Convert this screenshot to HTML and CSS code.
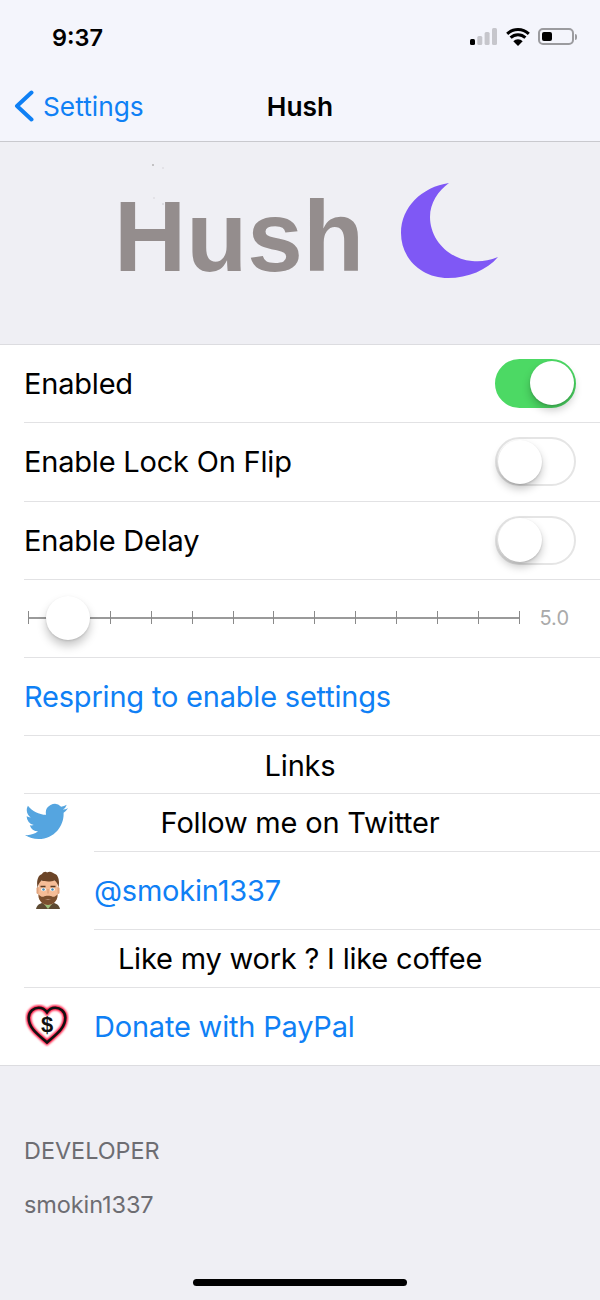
FILE: index.html
```html
<html>
<head>
<meta charset="UTF-8">
<meta name="viewport" content="width=device-width, initial-scale=1.0">
<title>Hush</title>
<link rel="stylesheet" href="styles.css">
</head>
<body>
<div class="phone">
    <div class="topbar">
        <div class="status">
            <span class="time">9:37</span>
            <div class="status-icons">
                <svg class="signal" width="27" height="17" viewBox="0 0 27 17">
                    <rect x="0" y="11" width="5" height="6" rx="1.5" fill="#000"/>
                    <rect x="7.3" y="8" width="5" height="9" rx="1.5" fill="#c6c6cc"/>
                    <rect x="14.6" y="4" width="5" height="13" rx="1.5" fill="#c6c6cc"/>
                    <rect x="22" y="0" width="5" height="17" rx="1.5" fill="#c6c6cc"/>
                </svg>
                <svg class="wifi" width="24" height="18" viewBox="0 0 24 18">
                    <path d="M12 18L7.300 13.200a6.600 6.600 0 0 1 9.400 0z" fill="#000"/>
                    <path d="M1.200 5.800a15.800 15.800 0 0 1 21.600 0M4.600 9.600a10.800 10.800 0 0 1 14.800 0" fill="none" stroke="#000" stroke-width="3"/>
                </svg>
                <div class="battery"><span class="battery-level"></span></div>
                <span class="battery-nub"></span>
            </div>
        </div>
        <div class="nav">
            <a class="back">
                <svg width="20" height="32" viewBox="0 0 20 32"><path d="M17.500 2.500L3 16l14.500 13.500" fill="none" stroke="#0f80f5" stroke-width="4" stroke-linecap="round" stroke-linejoin="round"/></svg>
                <span>Settings</span>
            </a>
            <span class="nav-title">Hush</span>
        </div>
    </div>

    <div class="banner">
        <svg class="specks" width="20" height="45" viewBox="0 0 20 45">
            <circle cx="3" cy="2" r="1" fill="#b5b3b5"/>
            <circle cx="13" cy="5" r="0.8" fill="#d3d2d6"/>
            <circle cx="4" cy="35" r="0.8" fill="#d3d2d6"/>
            <circle cx="13" cy="41" r="0.8" fill="#c5c4c8"/>
        </svg>
        <span class="logo-text">Hush</span>
        <svg class="moon" width="100" height="100" viewBox="0 0 100 100">
            <path d="M49 2C22 6 1 26 1 52c0 26 21 45 47 45 20 0 39-8 50-21-10 4-18 5-26 4C48 78 30 58 30 36 30 22 38 10 49 2z" fill="#7f58f5"/>
        </svg>
    </div>

    <div class="list">
        <div class="row tall">
            <span class="row-label first-label">Enabled</span>
            <div class="toggle on"><span class="knob"></span></div>
        </div>
        <div class="row tall">
            <span class="row-label">Enable Lock On Flip</span>
            <div class="toggle"><span class="knob"></span></div>
        </div>
        <div class="row tall">
            <span class="row-label">Enable Delay</span>
            <div class="toggle"><span class="knob"></span></div>
        </div>
        <div class="row tall">
            <div class="slider">
                <div class="ticks">
                    <i></i><i></i><i></i><i></i><i></i><i></i><i></i><i></i><i></i><i></i><i></i><i></i><i></i>
                </div>
                <span class="slider-thumb"></span>
            </div>
            <span class="slider-value">5.0</span>
        </div>
        <div class="row tall">
            <span class="row-label link">Respring to enable settings</span>
        </div>
        <div class="row short center-row">
            <span class="row-label">Links</span>
        </div>
        <div class="icon-row short">
            <div class="icon-cell">
                <svg class="bird" width="43" height="37" viewBox="0 2 24 20"><path d="M23.953 4.570a10 10 0 01-2.825.775 4.958 4.958 0 002.163-2.723c-.951.555-2.005.959-3.127 1.184a4.920 4.920 0 00-8.384 4.482C7.690 8.095 4.067 6.130 1.640 3.162a4.822 4.822 0 00-.666 2.475c0 1.710.870 3.213 2.188 4.096a4.904 4.904 0 01-2.228-.616v.060a4.923 4.923 0 003.946 4.827 4.996 4.996 0 01-2.212.085 4.936 4.936 0 004.604 3.417 9.867 9.867 0 01-6.102 2.105c-.390 0-.779-.023-1.170-.067a13.995 13.995 0 007.557 2.209c9.053 0 13.998-7.496 13.998-13.985 0-.210 0-.420-.015-.630A9.935 9.935 0 0024 4.590z" fill="#55a5e0"/></svg>
            </div>
            <span class="row-label centered">Follow me on Twitter</span>
        </div>
        <div class="icon-row tall">
            <div class="icon-cell">
                <svg class="memoji" width="30" height="38" viewBox="0 0 30 38">
                    <path d="M3 38c1-5 6-7 12-7s11 2 12 7z" fill="#5d4a32"/>
                    <path d="M11 33l4 5 4-5z" fill="#9dc07a"/>
                    <rect x="3.500" y="16" width="3" height="7" rx="1.500" fill="#e0a47e"/>
                    <rect x="23.500" y="16" width="3" height="7" rx="1.500" fill="#e0a47e"/>
                    <path d="M5.500 10h19v14c0 6-5 10-9.500 10S5.500 30 5.500 24z" fill="#f5bd97"/>
                    <path d="M5.500 23c1 2 3 3 5 2.800 2-1.300 7-1.300 9 0 2 .2 4-.8 5-2.800v2c0 5-5 9-9.500 9S5.500 30 5.500 25z" fill="#7a4f2e"/>
                    <path d="M12 28q3 1.200 6 0-3 2.200-6 0z" fill="#f6d8c8"/>
                    <path d="M4.500 17C3 8 6 4 9 3c1-2 4-3 5-1.500 3-2 6 0 7 1 4 1 6 6 4.500 14-1-4-2-6-4-7-4 1.500-10 1-13 0-2 2-3.500 4-4 7.500z" fill="#6b4427"/>
                    <ellipse cx="10.500" cy="18.500" rx="2.400" ry="1.700" fill="#fff"/>
                    <ellipse cx="19.500" cy="18.500" rx="2.400" ry="1.700" fill="#fff"/>
                    <circle cx="10.500" cy="18.500" r="1.300" fill="#4d8ab0"/>
                    <circle cx="19.500" cy="18.500" r="1.300" fill="#4d8ab0"/>
                    <path d="M7.500 15.500h5M17.500 15.500h5" stroke="#5a3a22" stroke-width="1.300"/>
                    <path d="M15 18v4.500" stroke="#d99b75" stroke-width="1.200"/>
                </svg>
            </div>
            <span class="row-label link">@smokin1337</span>
        </div>
        <div class="row short center-row">
            <span class="row-label">Like my work ? I like coffee</span>
        </div>
        <div class="icon-row tall last">
            <div class="icon-cell">
                <svg class="heart" width="44" height="43" viewBox="0 0 48 47">
                    <defs><filter id="glow" x="-20%" y="-20%" width="140%" height="140%"><feGaussianBlur stdDeviation="1"/></filter></defs>
                    <path d="M24 42C15 34 4 27 4 15 4 8 10 4 15 4c4 0 7 2 9 5 2-3 5-5 9-5 5 0 11 4 11 11 0 12-11 19-20 27z" fill="none" stroke="#ff0030" stroke-width="5.500" filter="url(#glow)"/>
                    <path d="M24 42C15 34 4 27 4 15 4 8 10 4 15 4c4 0 7 2 9 5 2-3 5-5 9-5 5 0 11 4 11 11 0 12-11 19-20 27z" fill="none" stroke="#111" stroke-width="2.800"/>
                    <text x="24" y="31" class="heart-dollar">$</text>
                </svg>
            </div>
            <span class="row-label link">Donate with PayPal</span>
        </div>
    </div>

    <div class="footer">
        <div class="footer-title">DEVELOPER</div>
        <div class="footer-name">smokin1337</div>
        <div class="home-bar"></div>
    </div>
</div>
</body>
</html>
```

FILE: styles.css
```css
html, body {
    margin: 0;
    padding: 0;
}
body {
    font-family: Inter, Roboto, sans-serif;
    background-color: #efeff4;
    color: #000;
}
.phone {
    width: 600px;
    height: 1300px;
    overflow: hidden;
    display: flex;
    flex-direction: column;
}

/* top bars */
.topbar {
    height: 141px;
    background-color: #f4f5fc;
    border-bottom: 1px solid #c9c9ce;
    flex: none;
}
.status {
    height: 74px;
    display: flex;
    justify-content: space-between;
    box-sizing: border-box;
    padding: 22px 23px 0 52px;
}
.time {
    font-size: 23.500px;
    font-weight: 600;
    line-height: 32px;
}
.status-icons {
    display: flex;
    align-items: flex-start;
    padding-top: 6px;
}
.wifi {
    margin-left: 9px;
}
.battery {
    width: 36px;
    height: 17px;
    margin-left: 8px;
    border: 2px solid #9b9b9f;
    border-radius: 5px;
    box-sizing: border-box;
    padding: 2px;
}
.battery-level {
    display: block;
    width: 10px;
    height: 100%;
    background-color: #000;
    border-radius: 2px;
}
.battery-nub {
    width: 2px;
    height: 6px;
    margin: 6px 0 0 1px;
    background-color: #9b9b9f;
    border-radius: 0 2px 2px 0;
}
.nav {
    height: 67px;
    display: flex;
    align-items: center;
    justify-content: center;
    position: relative;
}
.back {
    position: absolute;
    left: 14px;
    top: 16px;
    display: flex;
    align-items: center;
    gap: 9px;
    color: #0f80f5;
    font-size: 26.300px;
}
.nav-title {
    font-size: 26.300px;
    font-weight: 600;
    margin-top: -2px;
}

/* logo */
.banner {
    height: 202px;
    flex: none;
    position: relative;
    display: flex;
    align-items: flex-start;
    box-sizing: border-box;
    padding: 39px 0 0 114px;
    background-color: #efeff4;
}
.specks {
    position: absolute;
    left: 150px;
    top: 21px;
}
.logo-text {
    font-family: "Liberation Sans", Arial, sans-serif;
    font-weight: 700;
    font-size: 100px;
    line-height: 110px;
    color: #948d8d;
}
.moon {
    margin-left: 36px;
}

/* list */
.list {
    background-color: #fff;
    border-top: 1px solid #dcdce0;
    border-bottom: 1px solid #dcdce0;
    flex: none;
}
.row, .icon-row {
    display: flex;
    align-items: center;
    box-sizing: border-box;
    position: relative;
}
.row {
    margin-left: 24px;
    padding-right: 24px;
    border-bottom: 1px solid #e2e2e4;
    justify-content: space-between;
}
.tall {
    height: 78.300px;
}
.short {
    height: 57.600px;
}
.icon-row.last {
    height: 77.400px;
}
.row-label {
    font-size: 29px;
    letter-spacing: -0.200px;
}
.first-label {
    margin-top: -1px;
}
.link {
    color: #0f80f5;
}
.center-row {
    margin-left: 0;
    padding: 0;
    justify-content: center;
    border-bottom: 0;
    box-shadow: inset 0 -1px 0 #e2e2e4;
}
.center-row::before {
    content: "";
    position: absolute;
    left: 0;
    bottom: 0;
    width: 24px;
    height: 1px;
    background-color: #fff;
}
.icon-cell {
    width: 94px;
    flex: none;
    display: flex;
    padding-left: 25px;
    box-sizing: border-box;
}
.icon-row .row-label {
    flex: 1;
    align-self: stretch;
    display: flex;
    align-items: center;
    border-bottom: 1px solid #e2e2e4;
}
.icon-row .row-label.centered {
    justify-content: center;
    padding-right: 94px;
}
.icon-row.last .row-label {
    border-bottom: 0;
}
.bird {
    margin-top: -3px;
}
.memoji {
    margin: -2px 0 0 8px;
}
.heart {
    margin: -2px 0 0 0;
}
.heart-dollar {
    font-family: "Liberation Sans", Arial, sans-serif;
    font-size: 24px;
    font-weight: 700;
    text-anchor: middle;
    fill: #111;
}

/* switches */
.toggle {
    width: 81px;
    height: 49px;
    border-radius: 25px;
    border: 2.500px solid #e5e5e5;
    box-sizing: border-box;
    display: flex;
    align-items: center;
    padding: 0 0.500px;
    background-color: #fff;
}
.toggle.on {
    background-color: #4cd964;
    border-color: #4cd964;
    justify-content: flex-end;
    margin-top: -1px;
}
.knob {
    width: 44px;
    height: 44px;
    border-radius: 50%;
    background-color: #fff;
    box-shadow: 0 5px 9px rgba(0, 0, 0, 0.22), 0 1px 2px rgba(0, 0, 0, 0.15);
}

/* slider */
.slider {
    width: 492px;
    height: 14px;
    margin: -2px 0 0 4px;
    position: relative;
}
.ticks {
    height: 100%;
    display: flex;
    justify-content: space-between;
    align-items: center;
    background: linear-gradient(#9a9a9a, #9a9a9a) center / 100% 2px no-repeat;
}
.ticks i {
    display: block;
    width: 1px;
    height: 13px;
    background-color: #8a8a8a;
}
.slider-thumb {
    position: absolute;
    left: 18px;
    top: -15px;
    width: 44px;
    height: 44px;
    border-radius: 50%;
    background-color: #fff;
    box-shadow: 0 6px 10px rgba(0, 0, 0, 0.22), 0 1px 2px rgba(0, 0, 0, 0.12);
}
.slider-value {
    font-size: 20px;
    color: #aaa;
    margin: -2px 7px 0 0;
}

/* footer */
.footer {
    flex: 1;
    padding: 70px 0 0 24px;
    position: relative;
    color: #6d6d72;
}
.footer-title {
    font-size: 23.400px;
    line-height: 30px;
}
.footer-name {
    font-size: 23.500px;
    line-height: 30px;
    letter-spacing: -0.100px;
    margin-top: 24px;
}
.home-bar {
    position: absolute;
    left: 193px;
    bottom: 14px;
    width: 214px;
    height: 7px;
    border-radius: 4px;
    background-color: #000;
}
```
